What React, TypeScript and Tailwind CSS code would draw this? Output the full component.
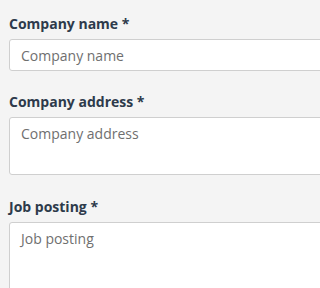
import React from "react";

export default function App() {
  const font = { fontFamily: '"Open Sans", "Noto Sans", sans-serif' };
  return (
    <div
      className="w-full h-[288px] overflow-hidden bg-[#f4f4f4] pl-[9px] pt-[14px]"
      style={font}
    >
      <div className="mr-[-40px]">
        <label className="block text-[14px] leading-[20px] font-bold text-[#2d3a4b] mb-[5px]">
          Company name *
        </label>
        <input
          placeholder="Company name"
          className="block w-full h-[32px] px-[11px] text-[14px] leading-[20px] bg-white border border-[#cfcfcf] rounded-[3px] placeholder:text-[#6f6f6f] text-[#555] outline-none"
        />
        <label className="block mt-[21px] text-[14px] leading-[20px] font-bold text-[#2d3a4b] mb-[5px]">
          Company address *
        </label>
        <textarea
          placeholder="Company address"
          className="block w-full h-[58px] px-[11px] py-[6px] text-[14px] leading-[20px] bg-white border border-[#cfcfcf] rounded-[3px] placeholder:text-[#6f6f6f] text-[#555] outline-none resize-none"
        />
        <label className="block mt-[22px] text-[14px] leading-[20px] font-bold text-[#2d3a4b] mb-[5px]">
          Job posting *
        </label>
        <textarea
          placeholder="Job posting"
          className="block w-full h-[120px] px-[11px] py-[6px] text-[14px] leading-[20px] bg-white border border-[#cfcfcf] rounded-[3px] placeholder:text-[#6f6f6f] text-[#555] outline-none resize-none"
        />
      </div>
    </div>
  );
}
